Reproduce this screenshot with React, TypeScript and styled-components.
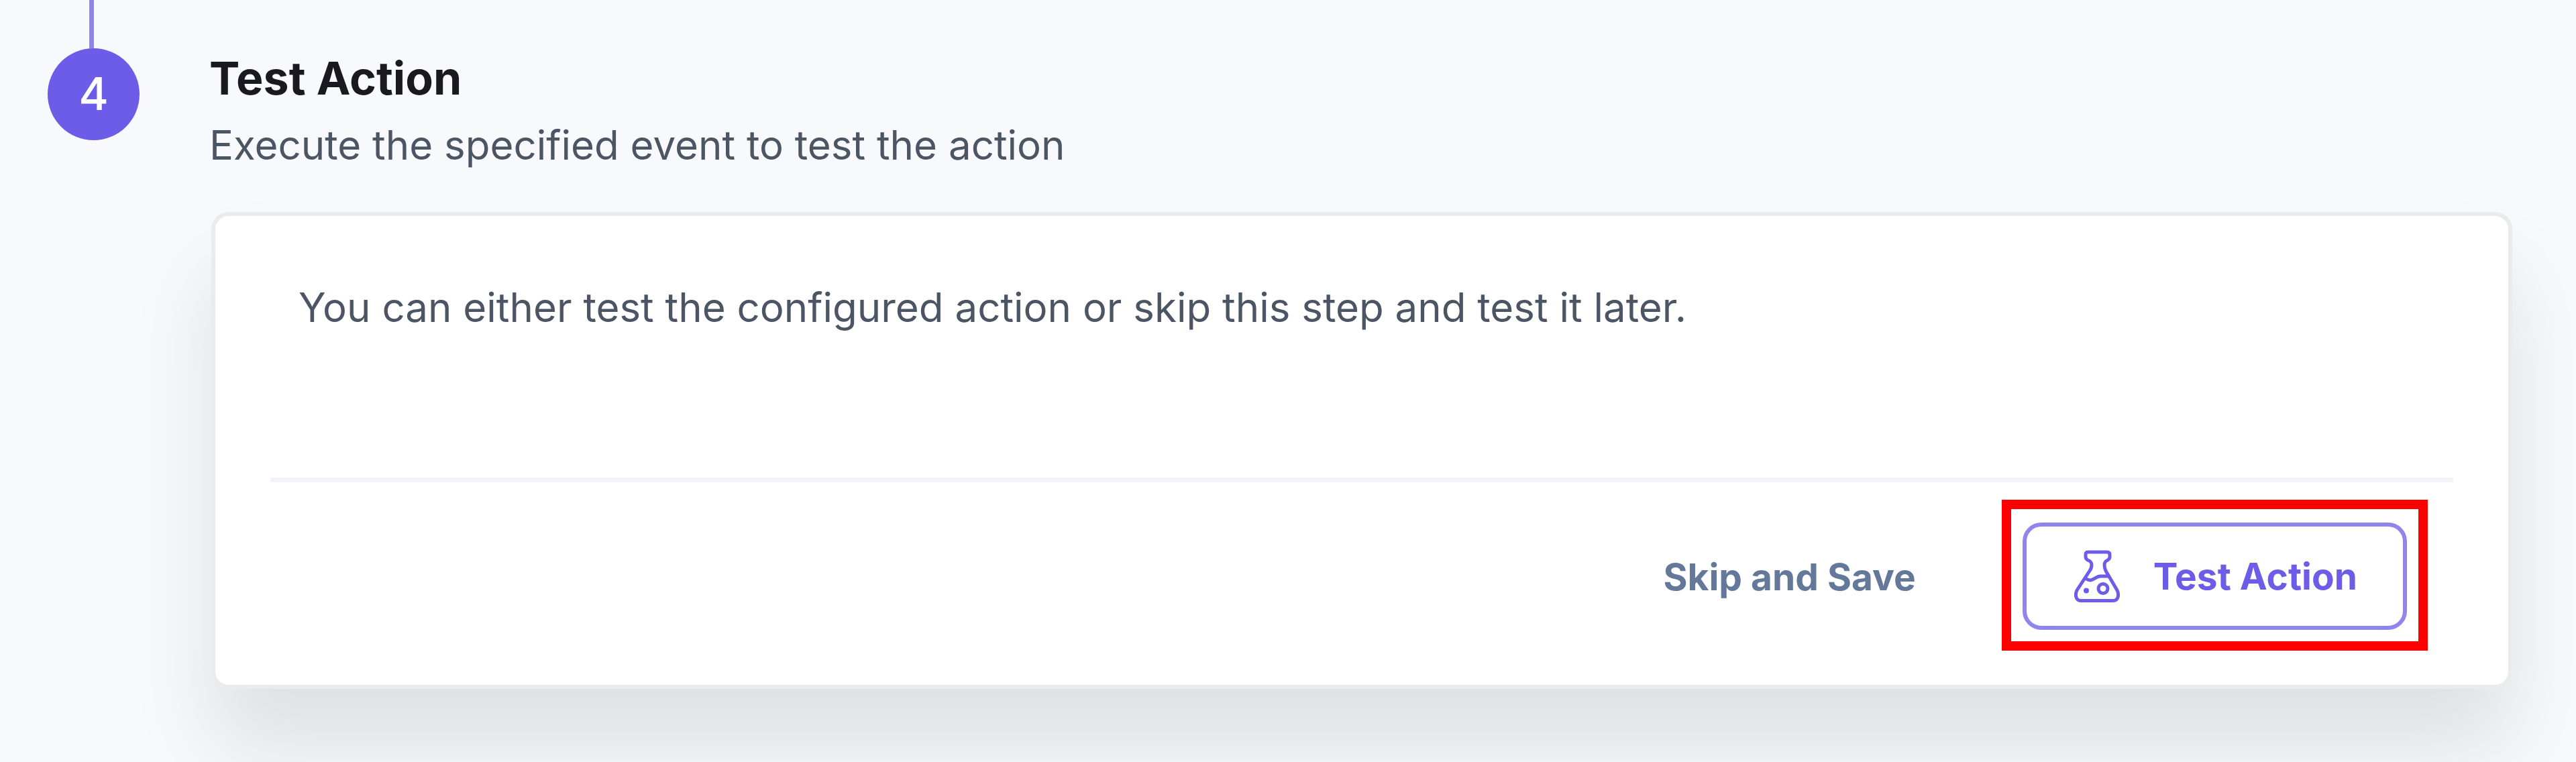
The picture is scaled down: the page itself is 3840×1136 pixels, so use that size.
import React from "react";
import styled, { createGlobalStyle } from "styled-components";

const color = {
  page: "#f8f9fd",
  accent: "#6c5ce7",
  accentSoft: "#9084ed",
  title: "#1b1920",
  text: "#4b5563",
  muted: "#64789a",
  border: "#eaebeb",
  rule: "#f1f3f8",
};

const GlobalStyle = createGlobalStyle`
  *, *::before, *::after { box-sizing: border-box; }
  body {
    margin: 0;
    min-height: 100vh;
    background: ${color.page};
    font-family: Inter, "Liberation Sans", sans-serif;
  }
`;

const Step = styled.section`
  display: flex;
  gap: 104px;
  padding: 0 95px 109px 71px;
`;

const Rail = styled.div`
  flex: none;
`;

const Connector = styled.div`
  width: 7px;
  height: 72px;
  margin-left: 62px;
  background: ${color.accentSoft};
`;

const StepNumber = styled.div`
  display: grid;
  place-items: center;
  width: 137px;
  height: 137px;
  padding-bottom: 4px;
  border-radius: 50%;
  background: ${color.accent};
  color: #fff;
  font-size: 68px;
  font-weight: 500;
  line-height: 96px;
`;

const Content = styled.div`
  flex: 1;
  min-width: 0;
  padding-top: 68px;
`;

const Title = styled.h2`
  margin: 0 0 4px;
  color: ${color.title};
  font-size: 68px;
  font-weight: 700;
  line-height: 96px;
`;

const Text = styled.p`
  margin: 0;
  color: ${color.text};
  font-size: 60px;
  line-height: 96px;
`;

const Card = styled.div`
  margin: 52px 0 0 3px;
  padding: 0 82px 51px;
  border: 6px solid ${color.border};
  border-radius: 26px;
  background: #fff;
  box-shadow: 0 88px 128px rgba(0, 0, 0, 0.1);
`;

const CardBody = styled.div`
  padding: 88px 42px 206px;
`;

const CardFooter = styled.footer`
  display: flex;
  justify-content: flex-end;
  align-items: center;
  gap: 128px;
  padding: 26px 38px 0 0;
  border-top: 7px solid ${color.rule};
`;

const Button = styled.button`
  display: flex;
  align-items: center;
  gap: 50px;
  padding: 4px 0 0;
  border: 0;
  background: none;
  color: ${color.muted};
  font-family: inherit;
  font-size: 55px;
  font-weight: 700;
  line-height: 96px;
  cursor: pointer;
`;

const OutlineButton = styled(Button)`
  height: 160px;
  padding: 0 68px 0 71px;
  border: 6px solid ${color.accentSoft};
  border-radius: 28px;
  color: ${color.accent};
`;

const Highlight = styled.div`
  padding: 20px 17px 17px;
  border: 14px solid #ff0000;
`;

function FlaskIcon() {
  return (
    <svg
      width="68"
      height="78"
      viewBox="0 0 68 78"
      fill="none"
      stroke="currentColor"
      strokeWidth="5"
      strokeLinecap="round"
      strokeLinejoin="round"
      aria-hidden="true"
    >
      <path d="M20 3H49Q53 3 53 7V10Q53 13 50 15Q45 17 45 22Q45 27 47 31L64 60Q66 64 65.500 69Q64 75.500 58 75.500H10Q4 75.500 2.500 69Q2 64 4 60L23 31Q26 27 26 22Q26 17 20 15Q17 13 17 10V7Q17 3 20 3Z" />
      <path d="M18 43C27 49 31 39 39 39H50" />
      <circle cx="43" cy="57.500" r="7" />
      <circle cx="18" cy="60.500" r="4" fill="currentColor" stroke="none" />
    </svg>
  );
}

export default function App() {
  return (
    <>
      <GlobalStyle />
      <Step>
        <Rail>
          <Connector />
          <StepNumber>4</StepNumber>
        </Rail>
        <Content>
          <Title>Test Action</Title>
          <Text>Execute the specified event to test the action</Text>
          <Card>
            <CardBody>
              <Text>
                You can either test the configured action or skip this step and
                test it later.
              </Text>
            </CardBody>
            <CardFooter>
              <Button type="button">Skip and Save</Button>
              <Highlight>
                <OutlineButton type="button">
                  <FlaskIcon />
                  Test Action
                </OutlineButton>
              </Highlight>
            </CardFooter>
          </Card>
        </Content>
      </Step>
    </>
  );
}
